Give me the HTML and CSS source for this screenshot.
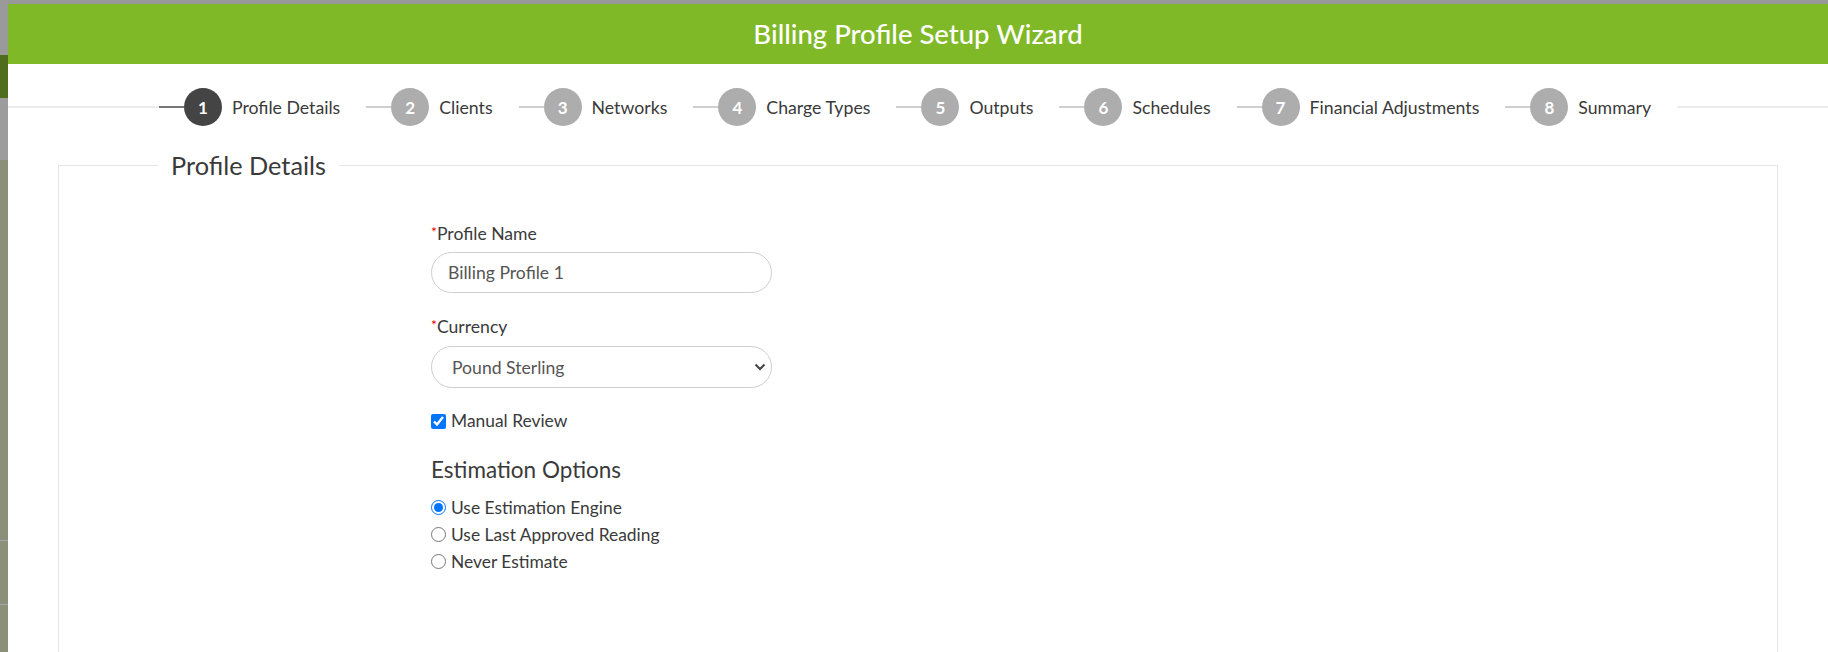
FILE: index.html
```html
<!DOCTYPE html>
<html>
<head>
<meta charset="utf-8">
<title>Billing Profile Setup Wizard</title>
<link rel="stylesheet" href="styles.css">
</head>
<body>
<div class="page">
  <div class="strip">
    <div class="strip-a"></div>
    <div class="strip-b"></div>
    <div class="strip-c"></div>
    <div class="strip-d"></div>
    <div class="strip-e"></div>
    <div class="strip-f"></div>
  </div>
  <div class="modal">
    <header class="modal-header">Billing Profile Setup Wizard</header>
    <nav class="stepper">
      <div class="step active"><span class="num">1</span><span class="label">Profile Details</span></div>
      <div class="step"><span class="num">2</span><span class="label">Clients</span></div>
      <div class="step"><span class="num">3</span><span class="label">Networks</span></div>
      <div class="step"><span class="num">4</span><span class="label">Charge Types</span></div>
      <div class="step"><span class="num">5</span><span class="label">Outputs</span></div>
      <div class="step"><span class="num">6</span><span class="label">Schedules</span></div>
      <div class="step"><span class="num">7</span><span class="label">Financial Adjustments</span></div>
      <div class="step"><span class="num">8</span><span class="label">Summary</span></div>
    </nav>
    <fieldset class="panel">
      <legend class="panel-title">Profile Details</legend>
      <form class="form">
        <label class="field-label"><span class="req">*</span>Profile Name</label>
        <input class="field" type="text" value="Billing Profile 1">
        <label class="field-label second"><span class="req">*</span>Currency</label>
        <div class="select-wrap">
          <select class="field select">
            <option>Pound Sterling</option>
          </select>
          <svg class="chevron" width="12" height="8" viewBox="0 0 12 8"><path d="M1.5 1.5 L6 6 L10.5 1.5" fill="none" stroke="#444" stroke-width="2"/></svg>
        </div>
        <label class="check-row"><input type="checkbox" class="box" checked>Manual Review</label>
        <h3 class="sub-title">Estimation Options</h3>
        <label class="radio-row"><input type="radio" name="est" class="box" checked>Use Estimation Engine</label>
        <label class="radio-row"><input type="radio" name="est" class="box">Use Last Approved Reading</label>
        <label class="radio-row"><input type="radio" name="est" class="box">Never Estimate</label>
      </form>
    </fieldset>
  </div>
</div>
</body>
</html>
```

FILE: styles.css
```css
html, body {
  margin: 0;
  padding: 0;
  height: 652px;
  overflow: hidden;
  background: #989898;
  font-family: Lato, "Noto Sans", sans-serif;
  color: #3a3a3a;
}

.page {
  display: flex;
  height: 652px;
}

.strip {
  width: 8px;
  flex: 0 0 8px;
  display: flex;
  flex-direction: column;
}
.strip-a { height: 55px; background: #9a9a9a; }
.strip-b { height: 43px; background: #4f6d1c; }
.strip-c { height: 62px; background: #9c9c9c; }
.strip-d { height: 380px; background: #8b907b; }
.strip-e { height: 63px; background: #8b907b; border-top: 1px solid #a3a3a3; }
.strip-f { flex: 1; background: #8b907b; border-top: 1px solid #a3a3a3; }

.modal {
  flex: 1;
  margin-top: 4px;
  background: #fff;
  display: flex;
  flex-direction: column;
  min-width: 0;
}

.modal-header {
  height: 60px;
  line-height: 60px;
  background: #80b927;
  color: #fff;
  text-align: center;
  font-size: 27.5px;
  font-weight: 500;
}

.stepper {
  margin-top: 24px;
  height: 38px;
  display: flex;
  justify-content: center;
  background: linear-gradient(#fff 0, #fff 18px, #ececec 18px, #ececec 20px, #fff 20px);
}

.step {
  display: flex;
  align-items: center;
  background: #fff;
  padding-right: 26px;
}
.step::before {
  content: "";
  width: 25px;
  height: 2px;
  background: #cfcfcf;
}
.step.active::before { background: #777; }

.num {
  width: 38px;
  height: 38px;
  border-radius: 50%;
  background: #adadad;
  color: #fff;
  font-weight: 700;
  font-size: 17px;
  display: flex;
  align-items: center;
  justify-content: center;
}
.step.active .num { background: #444; }

.label {
  margin-left: 10px;
  font-size: 17.7px;
  color: #3a3a3a;
}

.panel {
  margin: 24px 50px 0 50px;
  padding: 0;
  border: 1px solid #e6e6e6;
  min-height: 600px;
}

.panel-title {
  margin-left: 99px;
  padding: 0 13px;
  font-size: 25.3px;
  color: #3a3a3a;
}

.form {
  margin-left: 372px;
  width: 341px;
  padding-top: 40px;
  display: flex;
  flex-direction: column;
  align-items: flex-start;
}

.field-label {
  font-size: 17.6px;
  line-height: 24px;
  color: #3a3a3a;
  margin-bottom: 6px;
}
.field-label.second { margin-top: 20px; margin-bottom: 7px; }
.req { color: #e00; font-size: 14px; vertical-align: 3px; }

.field {
  box-sizing: border-box;
  width: 341px;
  height: 41px;
  border: 1px solid #cfcfcf;
  border-radius: 21px;
  padding: 0 16px;
  font-family: Lato, "Noto Sans", sans-serif;
  font-size: 17.6px;
  color: #555;
  background: #fff;
  outline: none;
}

.select-wrap {
  position: relative;
  width: 341px;
}
.select {
  appearance: none;
  -webkit-appearance: none;
  height: 42px;
  padding-left: 20px;
  display: block;
}
.chevron {
  position: absolute;
  right: 6px;
  top: 17px;
}

.check-row, .radio-row {
  display: flex;
  align-items: center;
  font-size: 17.4px;
  color: #3a3a3a;
}
.check-row {
  margin-top: 21px;
  line-height: 24px;
}
.radio-row { line-height: 27px; }

.box {
  width: 15px;
  height: 15px;
  margin: 0 5px 0 0;
}

.sub-title {
  margin: 23px 0 10px 0;
  font-size: 22.5px;
  line-height: 28px;
  font-weight: 400;
  color: #3a3a3a;
}
```
